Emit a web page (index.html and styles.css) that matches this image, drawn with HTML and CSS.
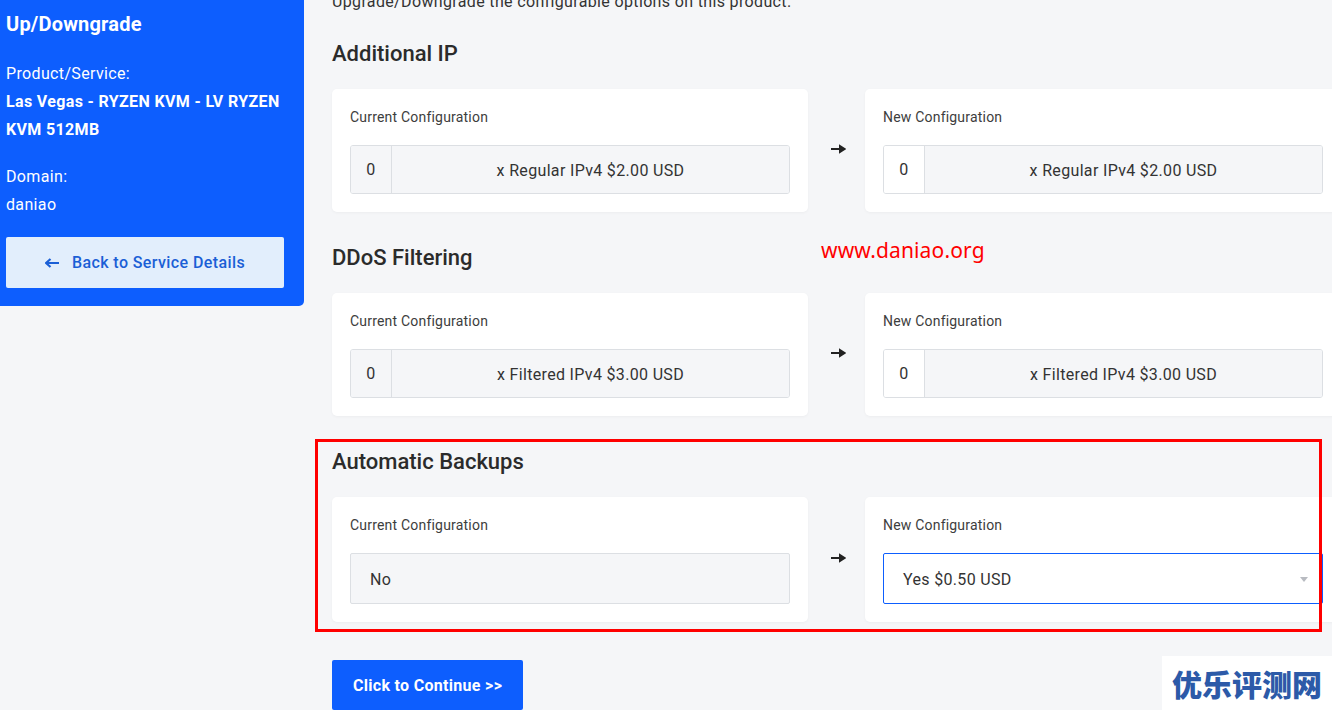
FILE: index.html
```html
<!DOCTYPE html>
<html lang="en">
<head>
    <meta charset="UTF-8">
    <title>Upgrade/Downgrade Options</title>
    <link rel="stylesheet" href="styles.css">
</head>
<body>
    <div class="page">
        <!-- Sidebar with product info -->
        <aside class="sidebar">
            <h2 class="sidebar-title">Up/Downgrade</h2>
            <div class="sidebar-label">Product/Service:</div>
            <div class="sidebar-value bold">Las Vegas - RYZEN KVM - LV RYZEN KVM 512MB</div>
            <div class="sidebar-label spaced">Domain:</div>
            <div class="sidebar-value">daniao</div>
            <a class="back-button" href="#">
                <svg width="15" height="10" viewBox="0 0 15 10"><path d="M1 5h13M5.5 1L1 5l4.5 4" fill="none" stroke="#1b5fd6" stroke-width="2.2"/></svg>
                <span>Back to Service Details</span>
            </a>
        </aside>

        <main class="content">
            <p class="intro">Upgrade/Downgrade the configurable options on this product.</p>

            <section class="option">
                <h3 class="option-title">Additional IP</h3>
                <div class="option-row">
                    <div class="config-card">
                        <div class="config-label">Current Configuration</div>
                        <div class="input-group readonly">
                            <span class="qty">0</span>
                            <span class="qty-desc">x Regular IPv4 $2.00 USD</span>
                        </div>
                    </div>
                    <div class="arrow">
                        <svg width="15" height="10" viewBox="0 0 15 10"><path d="M0 5h11M9 2L13.5 5 9 8z" fill="#222" stroke="#222" stroke-width="2"/></svg>
                    </div>
                    <div class="config-card">
                        <div class="config-label">New Configuration</div>
                        <div class="input-group">
                            <span class="qty">0</span>
                            <span class="qty-desc">x Regular IPv4 $2.00 USD</span>
                        </div>
                    </div>
                </div>
            </section>

            <section class="option">
                <h3 class="option-title">DDoS Filtering</h3>
                <div class="option-row">
                    <div class="config-card">
                        <div class="config-label">Current Configuration</div>
                        <div class="input-group readonly">
                            <span class="qty">0</span>
                            <span class="qty-desc">x Filtered IPv4 $3.00 USD</span>
                        </div>
                    </div>
                    <div class="arrow">
                        <svg width="15" height="10" viewBox="0 0 15 10"><path d="M0 5h11M9 2L13.5 5 9 8z" fill="#222" stroke="#222" stroke-width="2"/></svg>
                    </div>
                    <div class="config-card">
                        <div class="config-label">New Configuration</div>
                        <div class="input-group">
                            <span class="qty">0</span>
                            <span class="qty-desc">x Filtered IPv4 $3.00 USD</span>
                        </div>
                    </div>
                </div>
            </section>

            <section class="option">
                <h3 class="option-title">Automatic Backups</h3>
                <div class="option-row">
                    <div class="config-card">
                        <div class="config-label">Current Configuration</div>
                        <div class="field readonly">No</div>
                    </div>
                    <div class="arrow">
                        <svg width="15" height="10" viewBox="0 0 15 10"><path d="M0 5h11M9 2L13.5 5 9 8z" fill="#222" stroke="#222" stroke-width="2"/></svg>
                    </div>
                    <div class="config-card">
                        <div class="config-label">New Configuration</div>
                        <div class="field select">
                            <span>Yes $0.50 USD</span>
                            <span class="caret"></span>
                        </div>
                    </div>
                </div>
            </section>

            <button class="continue-button">Click to Continue &gt;&gt;</button>
        </main>
    </div>

    <!-- annotations over the screenshot -->
    <div class="highlight-box"></div>
    <div class="site-mark">www.daniao.org</div>
    <div class="corner-mark">优乐评测网</div>
</body>
</html>
```

FILE: styles.css
```css
body {
    margin: 0;
    padding: 0;
    background: #f5f6f8;
    font-family: Roboto, "Liberation Sans", sans-serif;
    color: #333;
    overflow: hidden;
    position: relative;
    height: 710px;
}

.page {
    display: flex;
    align-items: flex-start;
}

/* Sidebar */
.sidebar {
    flex: 0 0 304px;
    box-sizing: border-box;
    background: #0d5efe;
    color: #fff;
    padding: 10px 20px 18px 6px;
    border-bottom-right-radius: 5px;
    font-size: 16px;
    line-height: 28px;
    letter-spacing: 0.35px;
}

.sidebar-title {
    margin: 0 0 22px;
    font-size: 20px;
    font-weight: 700;
    line-height: 28px;
    letter-spacing: 0.2px;
}

.sidebar-value.bold {
    font-weight: 700;
}

.sidebar-label.spaced {
    margin-top: 19px;
}

.back-button {
    display: flex;
    align-items: center;
    justify-content: center;
    gap: 12px;
    margin-top: 18px;
    height: 51px;
    background: #e2eefc;
    border-radius: 2px;
    color: #1b5fd6;
    text-decoration: none;
    font-size: 16px;
    font-weight: 500;
    letter-spacing: 0.4px;
}

/* Main column */
.content {
    flex: 0 0 auto;
    padding-left: 28px;
}

.intro {
    margin: -9px 0 0;
    font-size: 16px;
    line-height: 22px;
    letter-spacing: 0.35px;
    color: #333;
}

.option {
    margin-top: 28px;
}

.option + .option {
    margin-top: 33px;
}

.option-title {
    margin: 0 0 22px;
    font-size: 22px;
    font-weight: 500;
    line-height: 26px;
    color: #2b2b2b;
}

.option-row {
    display: grid;
    grid-template-columns: 476px 57px 476px;
}

.config-card {
    background: #fff;
    border-radius: 5px;
    padding: 18px;
    box-shadow: 0 1px 3px rgba(0, 0, 0, 0.04);
}

.config-label {
    font-size: 14px;
    line-height: 20px;
    letter-spacing: 0.2px;
    color: #3d3d3d;
    margin-bottom: 18px;
}

.arrow {
    display: flex;
    align-items: center;
    justify-content: center;
    padding: 0 0 4px 3px;
}

.input-group {
    display: flex;
    height: 49px;
    box-sizing: border-box;
    border: 1px solid #dcdfe3;
    border-radius: 3px;
    font-size: 16px;
    letter-spacing: 0.33px;
    overflow: hidden;
}

.input-group .qty {
    flex: 0 0 40px;
    display: flex;
    align-items: center;
    justify-content: center;
    background: #fff;
    border-right: 1px solid #dcdfe3;
}

.input-group.readonly .qty {
    background: #f5f6f8;
}

.input-group .qty-desc {
    flex: 1;
    display: flex;
    align-items: center;
    justify-content: center;
    padding-top: 1px;
    background: #f5f6f8;
}

.field {
    display: flex;
    align-items: center;
    justify-content: space-between;
    height: 51px;
    box-sizing: border-box;
    padding: 2px 14px 0 19px;
    border: 1px solid #dcdfe3;
    border-radius: 2px;
    font-size: 16px;
    letter-spacing: 0.33px;
}

.field.readonly {
    background: #f5f6f8;
}

.field.select {
    background: #fff;
    border-color: #0d5efe;
}

.caret {
    width: 0;
    height: 0;
    border-left: 4px solid transparent;
    border-right: 4px solid transparent;
    border-top: 5px solid #b8bbc1;
}

.continue-button {
    margin-top: 38px;
    padding: 15px 21px 13px;
    background: #0d5efe;
    color: #fff;
    border: none;
    border-radius: 2px;
    font-family: Roboto, "Liberation Sans", sans-serif;
    font-size: 16px;
    font-weight: 700;
    line-height: 22px;
    letter-spacing: 0.3px;
    cursor: pointer;
}

/* Annotations */
.highlight-box {
    position: absolute;
    left: 315px;
    top: 439px;
    width: 1001px;
    height: 187px;
    border: 3px solid #ff0000;
}

.site-mark {
    position: absolute;
    left: 821px;
    top: 236px;
    font-family: "Noto Sans", "DejaVu Sans", sans-serif;
    font-size: 21px;
    line-height: 28px;
    letter-spacing: 0.15px;
    color: #ff0000;
}

.corner-mark {
    position: absolute;
    left: 1162px;
    top: 656px;
    width: 170px;
    height: 54px;
    background: #fff;
    display: flex;
    align-items: center;
    justify-content: center;
    font-family: "Noto Sans CJK SC", sans-serif;
    font-size: 30px;
    font-weight: 900;
    color: #2c5aa8;
}
```
